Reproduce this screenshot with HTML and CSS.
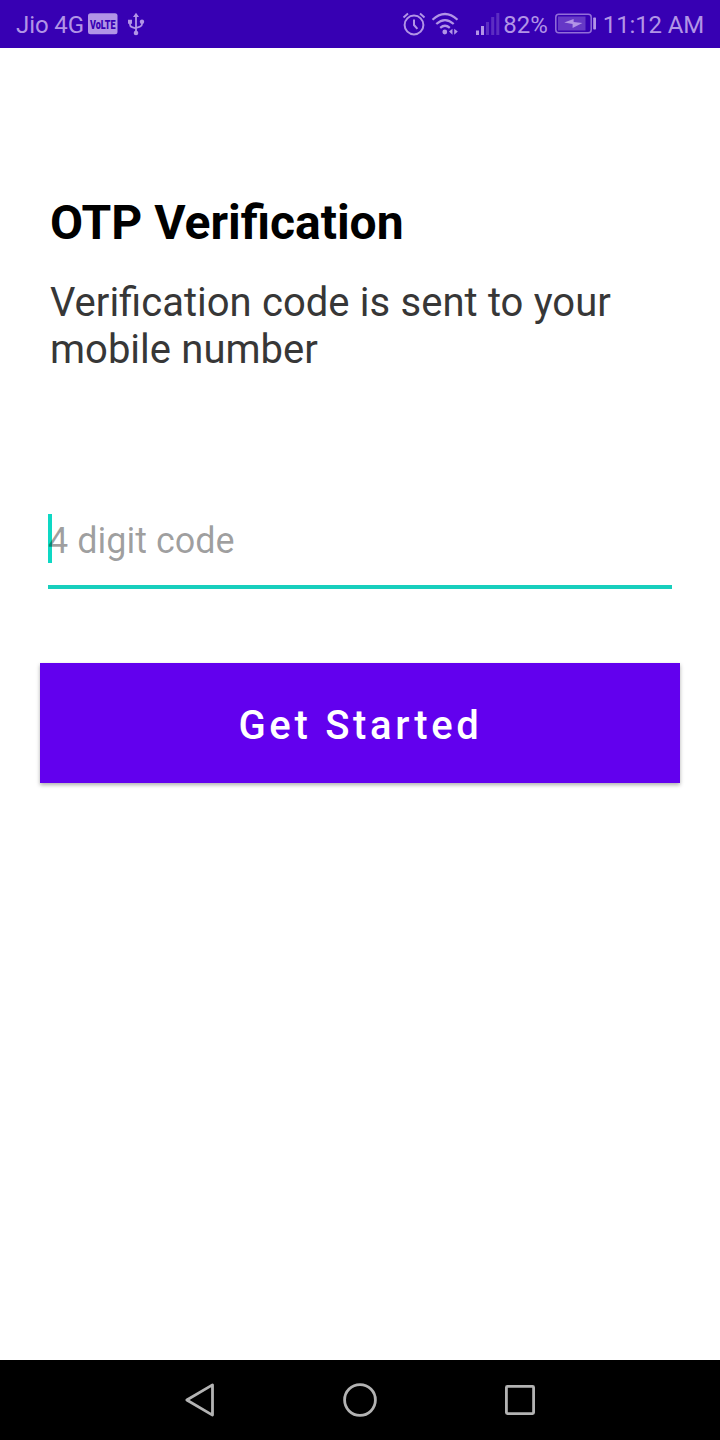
FILE: index.html
```html
<!DOCTYPE html>
<html lang="en">
<head>
<meta charset="utf-8">
<title>OTP Verification</title>
<link rel="stylesheet" href="styles.css">
</head>
<body>
<div class="screen">
  <header class="status">
    <div class="status-left">
      <span class="carrier">Jio 4G</span>
      <svg class="volte" width="30" height="22" viewBox="0 0 30 22">
        <rect width="29.5" height="21" rx="2.5" y=".3" fill="currentColor"/>
        <text x="2" y="15.5" textLength="25.5" lengthAdjust="spacingAndGlyphs">VoLTE</text>
      </svg>
      <svg class="usb" width="18" height="24" viewBox="0 0 18 24" fill="none" stroke="currentColor" stroke-width="1.8">
        <path d="M9 3v17M3 10v2.5q0 2 2 2.6L9 16.5M15 10v2q0 2-2 2.6L9 16"/>
        <path d="M9 .8 12 5H6ZM1 7.7h4v4H1Z" fill="currentColor" stroke="none"/>
        <circle cx="15" cy="9.7" r="2.2" fill="currentColor" stroke="none"/>
        <circle cx="9" cy="21" r="2.3" fill="currentColor" stroke="none"/>
      </svg>
    </div>
    <div class="status-right">
      <svg class="alarm" width="24" height="24" viewBox="0 0 24 24" fill="none" stroke="currentColor" stroke-width="2">
        <circle cx="12" cy="13" r="9.4"/>
        <path d="M12 7.5V13l3.4 3.8M1.5 5.4 6 1.6M22.5 5.4 18 1.6"/>
      </svg>
      <svg class="wifi" width="28" height="24" viewBox="0 0 28 24" fill="none" stroke="currentColor" stroke-width="2.2">
        <path d="M1.5 7.7Q14-3.7 26.5 7.7M5.3 12Q14 4.2 22.7 12M9.2 15.8Q14 11.7 18.8 15.8"/>
        <circle cx="13.8" cy="20" r="2.4" fill="currentColor" stroke="none"/>
        <path d="M21.5 16.8v6L18 19.6ZM23.2 16.8v6l3.6-3.2Z" fill="currentColor" stroke="none"/>
      </svg>
      <svg class="signal" width="24" height="24" viewBox="0 0 24 24" fill="currentColor">
        <path d="M0 18.5h3V23H0ZM5 14h3v9H5Z"/>
        <path opacity=".3" d="M10 10h3v13h-3ZM15.2 5h3v18h-3ZM20.3 1h3v22h-3Z"/>
      </svg>
      <span class="percent">82%</span>
      <svg class="battery" width="42" height="22" viewBox="0 0 42 22">
        <rect x=".8" y="1.3" width="35.4" height="18.4" rx="3" fill="none" stroke="currentColor" stroke-width="1.5" opacity=".75"/>
        <rect x="3" y="3.5" width="27.5" height="14" fill="currentColor" opacity=".38"/>
        <path d="M9.2 9.5 18.6 6v3l8.8 1-9.8 5v-4Z" fill="currentColor"/>
        <rect x="38.2" y="4.5" width="2.8" height="12" rx=".7" fill="currentColor"/>
      </svg>
      <span class="clock">11:12 AM</span>
    </div>
  </header>
  <main class="content">
    <h1 class="title">OTP Verification</h1>
    <p class="subtitle">Verification code is sent to your mobile number</p>
    <div class="field">
      <span class="caret"></span>
      <span class="hint">4 digit code</span>
    </div>
    <button class="submit">Get Started</button>
  </main>
  <nav class="navbar">
    <svg width="40" height="40" viewBox="0 0 40 40"><path d="M6.8 20 32.5 4.9v30.2Z"/></svg>
    <svg width="40" height="40" viewBox="0 0 40 40"><circle cx="20" cy="20" r="15.4"/></svg>
    <svg width="40" height="40" viewBox="0 0 40 40"><rect x="6.4" y="6.4" width="27.2" height="27.2" rx="1"/></svg>
  </nav>
</div>
</body>
</html>
```
FILE: styles.css
```css
* { box-sizing: border-box; }
body { margin: 0; background: #fff; font-family: Roboto, "Noto Sans", sans-serif; }
.screen { display: flex; flex-direction: column; width: 720px; height: 1440px; }

.status {
  display: flex; justify-content: space-between; align-items: center;
  height: 48px; padding: 0 16px; background: #3700b3; color: #b294e6;
  font-size: 24px; line-height: 28px; white-space: nowrap;
}
.status-left, .status-right { display: flex; align-items: center; }
.status svg { flex: none; }
.carrier, .percent, .clock { padding-top: 2px; }
.carrier { letter-spacing: -.1px; }
.clock { letter-spacing: -.15px; }
.volte { margin-left: 4px; overflow: visible; }
.volte text { font: 900 13.5px Roboto, sans-serif; fill: #3700b3; }
.usb { margin-left: 9px; }
.wifi { margin-left: 5px; }
.signal { margin-left: 17px; }
.percent { margin-left: 3px; }
.battery { margin: 0 6px 0 7px; }

.content { flex: 1; display: flex; flex-direction: column; padding: 147px 40px 0; }
.title { margin: 0 10px; font-size: 48px; line-height: 56px; font-weight: 700; color: #000; }
.subtitle { margin: 28px 10px 0; font-size: 40px; line-height: 47px; word-spacing: .4px; color: #373737; }
.field {
  position: relative; height: 75px; margin: 141px 8px 0; padding-top: 6px;
  border-bottom: 4px solid #18cfbd;
}
.hint { position: relative; display: block; font-size: 36px; line-height: 42px; color: rgba(0, 0, 0, .38); }
.caret { position: absolute; left: 0; top: 0; width: 4px; height: 49px; background: #0ed8c4; }
.submit {
  height: 120px; margin: 74px 0 0; padding: 5px 0 0 1px; border: 0; background: #6200ee; color: #fff;
  font: 500 40px/47px Roboto, sans-serif; letter-spacing: 3.7px;
  box-shadow: 0 2px 4px rgba(0, 0, 0, .32);
}

.navbar { display: flex; justify-content: center; align-items: center; gap: 120px; height: 80px; background: #000; }
.navbar svg { fill: none; stroke: #b3b3b3; stroke-width: 2.8; stroke-linejoin: round; }
```
